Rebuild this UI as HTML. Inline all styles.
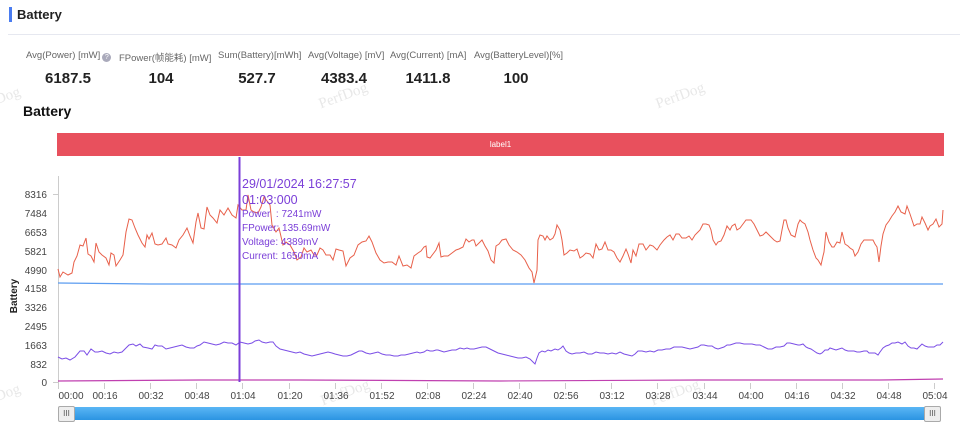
<!DOCTYPE html>
<html><head><meta charset="utf-8"><style>
body{margin:0;width:960px;height:430px;background:#fff;font-family:"Liberation Sans","Noto Sans CJK SC",sans-serif;position:relative;overflow:hidden}
.a{position:absolute;white-space:nowrap}
.lbl{font-size:9.5px;color:#666;top:50px}
.val{font-size:15px;font-weight:bold;color:#222;top:70px;text-align:center}
.wm{position:absolute;color:#e8e8e8;font-family:"Liberation Serif",serif;font-size:15px;transform:rotate(-20deg)}
</style></head><body>
<div class="a" style="left:9px;top:7px;width:3px;height:15px;background:#4a7cf0"></div>
<div class="a" style="left:17px;top:7px;font-size:13px;font-weight:bold;color:#222">Battery</div>
<div class="a" style="left:8px;top:34px;width:952px;height:1px;background:#e6e8f0"></div>

<div class="a lbl" style="left:26px">Avg(Power) [mW]<span style="display:inline-block;width:9px;height:9px;border-radius:50%;background:#aab;color:#fff;font-size:7px;text-align:center;line-height:9px;margin-left:2px;vertical-align:-1px">?</span></div>
<div class="a lbl" style="left:119px">FPower(帧能耗) [mW]</div>
<div class="a lbl" style="left:218px">Sum(Battery)[mWh]</div>
<div class="a lbl" style="left:308px">Avg(Voltage) [mV]</div>
<div class="a lbl" style="left:390px">Avg(Current) [mA]</div>
<div class="a lbl" style="left:474px">Avg(BatteryLevel)[%]</div>
<div class="a val" style="left:26px;width:84px">6187.5</div>
<div class="a val" style="left:119px;width:84px">104</div>
<div class="a val" style="left:215px;width:84px">527.7</div>
<div class="a val" style="left:302px;width:84px">4383.4</div>
<div class="a val" style="left:386px;width:84px">1411.8</div>
<div class="a val" style="left:474px;width:84px">100</div>

<div class="wm" style="left:-5px;top:88px">Dog</div>
<div class="wm" style="left:318px;top:88px">PerfDog</div>
<div class="wm" style="left:655px;top:88px">PerfDog</div>
<div class="wm" style="left:-5px;top:385px">Dog</div>
<div class="wm" style="left:320px;top:385px">PerfDog</div>
<div class="wm" style="left:650px;top:385px">PerfDog</div>

<div class="a" style="left:23px;top:103px;font-size:14px;font-weight:bold;color:#111">Battery</div>
<div class="a" style="left:57px;top:133px;width:887px;height:23px;background:#e8505d;color:#fff;font-size:8px;text-align:center;line-height:23px">label1</div>

<svg class="a" style="left:0;top:0" width="960" height="430" font-family="Liberation Sans, sans-serif">
<g font-size="10" fill="#444" text-anchor="end">
<text x="47" y="198">8316</text><text x="47" y="217">7484</text><text x="47" y="236">6653</text><text x="47" y="255">5821</text><text x="47" y="274">4990</text><text x="47" y="292">4158</text><text x="47" y="311">3326</text><text x="47" y="330">2495</text><text x="47" y="349">1663</text><text x="47" y="368">832</text><text x="47" y="386">0</text>
</g>
<text x="17" y="296" font-size="10" font-weight="bold" fill="#222" transform="rotate(-90 17 296)" text-anchor="middle">Battery</text>
<line x1="58.5" y1="176" x2="58.5" y2="389" stroke="#ccc"/>
<g stroke="#ccc"><line x1="53" y1="194.5" x2="58" y2="194.5"/><line x1="53" y1="382.5" x2="58" y2="382.5"/></g>
<g font-size="10" fill="#444" text-anchor="middle">
<text x="71" y="399">00:00</text><text x="105" y="399">00:16</text><text x="151" y="399">00:32</text><text x="197" y="399">00:48</text><text x="243" y="399">01:04</text><text x="290" y="399">01:20</text><text x="336" y="399">01:36</text><text x="382" y="399">01:52</text><text x="428" y="399">02:08</text><text x="474" y="399">02:24</text><text x="520" y="399">02:40</text><text x="566" y="399">02:56</text><text x="612" y="399">03:12</text><text x="658" y="399">03:28</text><text x="705" y="399">03:44</text><text x="751" y="399">04:00</text><text x="797" y="399">04:16</text><text x="843" y="399">04:32</text><text x="889" y="399">04:48</text><text x="935" y="399">05:04</text>
</g>
<g stroke="#ccc"><line x1="58.5" y1="383" x2="58.5" y2="389"/><line x1="104.5" y1="383" x2="104.5" y2="389"/><line x1="150.5" y1="383" x2="150.5" y2="389"/><line x1="196.5" y1="383" x2="196.5" y2="389"/><line x1="242.5" y1="383" x2="242.5" y2="389"/><line x1="289.5" y1="383" x2="289.5" y2="389"/><line x1="335.5" y1="383" x2="335.5" y2="389"/><line x1="381.5" y1="383" x2="381.5" y2="389"/><line x1="427.5" y1="383" x2="427.5" y2="389"/><line x1="473.5" y1="383" x2="473.5" y2="389"/><line x1="519.5" y1="383" x2="519.5" y2="389"/><line x1="565.5" y1="383" x2="565.5" y2="389"/><line x1="611.5" y1="383" x2="611.5" y2="389"/><line x1="657.5" y1="383" x2="657.5" y2="389"/><line x1="704.5" y1="383" x2="704.5" y2="389"/><line x1="750.5" y1="383" x2="750.5" y2="389"/><line x1="796.5" y1="383" x2="796.5" y2="389"/><line x1="842.5" y1="383" x2="842.5" y2="389"/><line x1="888.5" y1="383" x2="888.5" y2="389"/><line x1="934.5" y1="383" x2="934.5" y2="389"/></g>

<polyline fill="none" stroke="#e8604a" stroke-width="1" points="58,269 60,277 63,272 68,275 72,273 74,262 77,256 80,245 83,246 86,238 88,254 91,256 94,262 96,243 99,252 102,255 106,258 109,265 111,253 114,255 116,266 120,260 123,255 126,232 129,219 132,220 135,228 138,235 142,243 145,247 147,235 149,239 152,233 155,244 158,245 162,244 166,238 168,244 172,245 176,248 179,240 183,235 187,228 190,236 193,243 196,222 198,213 201,228 204,229 207,207 210,215 213,218 217,223 220,210 224,215 228,208 232,215 236,218 238,205 242,210 246,210 248,195 251,210 254,212 258,213 261,207 264,197 267,201 270,205 272,225 276,232 279,228 283,245 286,242 290,245 294,252 297,260 301,257 304,248 307,252 311,250 314,255 317,255 320,248 323,250 326,255 330,255 333,260 336,249 339,250 343,251 346,266 350,258 354,255 358,245 362,242 366,241 369,236 372,242 376,253 380,260 384,263 388,262 392,262 396,265 399,256 403,266 407,265 411,268 414,256 418,253 421,251 424,247 426,246 427,257 430,258 433,254 436,250 439,243 441,257 444,256 448,256 452,253 456,250 459,249 463,247 466,239 469,242 472,240 474,240 476,246 479,243 482,240 485,246 488,251 491,260 494,263 496,246 499,244 502,240 506,239 509,245 513,250 517,252 521,255 525,260 529,268 532,272 534,283 537,270 538,240 540,235 543,236 545,240 547,236 550,240 553,238 555,234 557,225 560,230 562,240 564,255 567,253 570,250 574,251 577,249 580,258 583,256 586,253 590,254 593,258 596,244 599,250 602,249 605,242 608,250 611,250 614,252 617,258 620,262 623,256 626,249 628,254 631,263 633,250 636,256 639,244 643,244 646,250 650,245 653,246 657,250 660,245 664,240 667,237 670,235 673,240 676,234 679,234 682,238 686,238 689,236 692,240 695,235 698,232 700,230 703,224 706,224 709,225 711,230 713,240 716,245 718,242 721,241 724,235 727,226 730,230 732,226 735,224 737,230 740,228 743,224 746,220 748,220 751,220 754,224 757,230 760,236 763,235 766,232 770,236 774,240 777,242 780,241 782,230 784,220 786,220 788,228 791,235 795,237 798,224 800,220 802,222 805,224 808,232 810,240 813,250 816,258 818,260 821,265 823,256 824,252 826,232 829,242 832,247 834,247 837,242 840,243 842,232 845,244 848,246 850,248 853,250 855,256 858,252 861,244 864,240 867,240 870,240 873,240 875,244 877,247 879,262 881,246 883,234 886,225 889,221 892,216 895,212 898,206 901,212 905,214 907,206 910,214 912,220 914,226 917,224 920,224 922,217 925,223 928,230 930,226 933,224 936,219 939,227 942,224 943,210"/>
<polyline fill="none" stroke="#5b9cf0" stroke-width="1.2" points="58,283 150,284 300,284 600,284 943,284"/>
<polyline fill="none" stroke="#7b4ee6" stroke-width="1" points="58,357 62,359 66,358 70,360 75,357 80,351 84,351 87,355 91,349 95,352 98,352 102,351 106,353 110,354 114,352 118,353 122,352 126,348 129,345 133,344 136,346 140,344 143,347 148,348 152,349 155,345 158,346 162,346 166,349 170,348 174,347 178,346 182,345 186,347 190,348 194,348 197,346 200,345 204,342 208,343 212,344 216,345 220,344 224,342 228,343 232,343 236,345 240,342 244,343 248,344 252,343 255,341 259,340 262,342 266,343 270,342 273,342 276,346 280,349 284,350 288,351 292,352 296,353 300,352 304,354 308,355 312,356 316,355 320,354 324,353 328,352 332,353 335,354 339,355 343,356 347,356 351,355 355,353 359,351 362,351 366,353 370,354 374,353 378,352 382,354 386,355 390,355 394,356 398,356 401,355 405,355 409,354 413,353 417,352 420,353 424,352 427,350 430,351 433,351 436,350 438,350 441,351 444,352 448,351 452,350 456,350 460,348 464,349 467,348 470,349 474,349 478,348 482,347 486,347 490,349 494,351 498,353 502,354 506,355 510,356 514,357 518,358 522,358 526,357 530,359 533,362 535,364 537,358 539,353 542,351 545,352 548,350 551,351 555,349 558,350 561,348 563,346 566,351 569,353 572,354 576,353 580,353 584,352 588,354 592,354 596,352 600,353 604,353 608,354 612,353 616,354 620,352 624,354 628,355 632,356 635,354 638,351 642,351 646,352 650,351 654,352 658,350 662,350 666,349 670,349 674,347 678,347 682,347 686,348 690,349 694,348 698,347 701,345 704,345 708,346 712,346 715,348 718,349 721,348 724,347 727,345 730,345 733,344 736,343 740,343 744,344 748,344 752,344 756,345 760,345 764,347 768,349 772,349 776,347 780,347 784,346 787,343 790,343 794,344 798,345 800,345 803,344 806,347 808,348 811,349 814,351 817,353 820,354 822,353 825,350 828,350 830,348 833,349 836,350 839,349 842,348 845,350 848,351 851,351 854,351 857,352 860,352 864,351 867,351 869,353 872,353 875,353 878,355 880,352 883,348 886,346 889,345 892,343 895,343 898,342 902,344 905,342 908,346 911,348 914,348 917,349 920,346 922,344 925,346 928,347 931,347 934,347 937,345 940,345 943,342"/>
<polyline fill="none" stroke="#c040b0" stroke-width="1.2" points="58,381 200,380 300,380 500,381 700,380 880,380 943,379"/>
<line x1="239.5" y1="157" x2="239.5" y2="382" stroke="#7b3fd8" stroke-width="2"/>
<g fill="#7b3fd8" font-size="12.5">
<text x="242" y="188">29/01/2024 16:27:57</text>
<text x="242" y="204">01:03:000</text>
<g font-size="10"><text x="242" y="217">Power&#160;&#160;: 7241mW</text><text x="242" y="231">FPower: 135.69mW</text><text x="242" y="245">Voltage: 4389mV</text><text x="242" y="259">Current: 1650mA</text></g>
</g>
</svg>

<div class="a" style="left:68px;top:407px;width:864px;height:13px;background:linear-gradient(#5ab6f5,#2b94e2)"></div>
<div class="a" style="left:58px;top:406px;width:15px;height:14px;background:#eee;border:1px solid #aaa;border-radius:2px;font-size:8px;text-align:center;line-height:14px;color:#555">III</div>
<div class="a" style="left:924px;top:406px;width:15px;height:14px;background:#eee;border:1px solid #aaa;border-radius:2px;font-size:8px;text-align:center;line-height:14px;color:#555">III</div>
</body></html>
